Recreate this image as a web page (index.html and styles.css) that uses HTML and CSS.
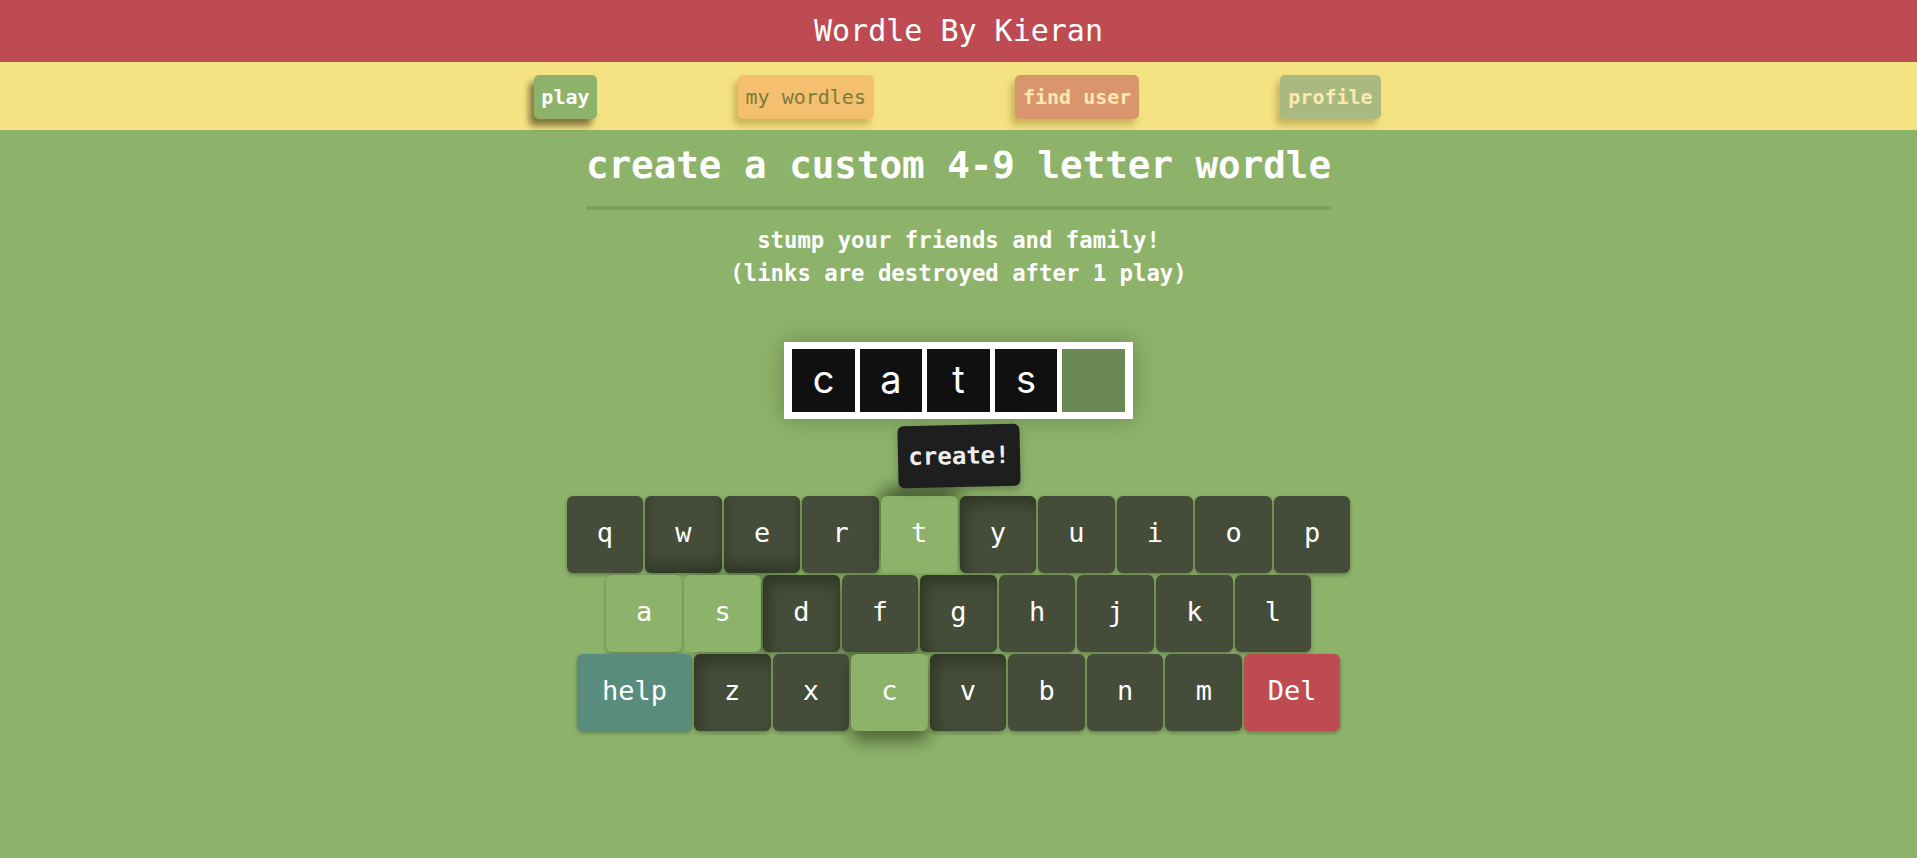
FILE: index.html
```html
<!DOCTYPE html>
<html lang="en">
<head>
<meta charset="utf-8">
<title>Wordle By Kieran</title>
<link rel="stylesheet" href="styles.css">
</head>
<body>
<header class="topbar">Wordle By Kieran</header>
<nav class="navbar">
  <a class="nav-btn nav-play">play</a>
  <a class="nav-btn nav-mine">my wordles</a>
  <a class="nav-btn nav-find">find user</a>
  <a class="nav-btn nav-profile">profile</a>
</nav>
<main class="content">
  <h1 class="heading">create a custom 4-9 letter wordle</h1>
  <p class="subtitle">stump your friends and family!<br>(links are destroyed after 1 play)</p>
  <div class="word-box">
    <div class="tile">c</div>
    <div class="tile">a</div>
    <div class="tile">t</div>
    <div class="tile">s</div>
    <div class="tile tile-empty"></div>
  </div>
  <button class="create-btn">create!</button>
  <div class="keyboard">
    <div class="kb-row">
      <div class="key">q</div><div class="key key-sh-a">w</div><div class="key key-sh-a">e</div><div class="key">r</div><div class="key key-used key-sh-top">t</div><div class="key key-sh-b">y</div><div class="key">u</div><div class="key">i</div><div class="key">o</div><div class="key">p</div>
    </div>
    <div class="kb-row">
      <div class="key key-used">a</div><div class="key key-used key-sh-r">s</div><div class="key key-sh-b">d</div><div class="key key-sh-bottom">f</div><div class="key key-sh-b">g</div><div class="key">h</div><div class="key">j</div><div class="key">k</div><div class="key">l</div>
    </div>
    <div class="kb-row">
      <div class="key key-help">help</div><div class="key key-sh-b">z</div><div class="key">x</div><div class="key key-used key-sh-bottom">c</div><div class="key key-sh-b">v</div><div class="key">b</div><div class="key">n</div><div class="key">m</div><div class="key key-del">Del</div>
    </div>
  </div>
</main>
</body>
</html>
```
FILE: styles.css
```css
html, body {
  margin: 0;
  padding: 0;
}
body {
  background: #8db36b;
  font-family: "DejaVu Sans Mono", "Liberation Mono", monospace;
  color: #ffffff;
  min-height: 858px;
}
.topbar {
  height: 62px;
  background: #bf4b52;
  display: flex;
  align-items: center;
  justify-content: center;
  font-size: 30px;
  color: #ffffff;
  padding-bottom: 2px;
  box-sizing: border-box;
}
.navbar {
  height: 68px;
  background: #f5e283;
  display: flex;
  align-items: center;
  justify-content: center;
  gap: 141px;
  padding-right: 2px;
}
.nav-btn {
  display: block;
  height: 44px;
  line-height: 44px;
  padding: 0 8px;
  font-size: 20px;
  border-radius: 5px;
  margin-top: 2px;
  box-shadow: -4px 6px 6px rgba(120, 100, 20, 0.35);
}
.nav-play {
  background: #8db36b;
  color: #ffffff;
  font-weight: bold;
  padding: 0 7px;
  box-shadow: -5px 7px 6px rgba(60, 50, 20, 0.6);
}
.nav-mine {
  background: #f4c06f;
  color: #7a7a3c;
}
.nav-find {
  background: #d9956b;
  color: #fbe9b0;
  font-weight: bold;
}
.nav-profile {
  background: #a9b980;
  color: #fbe9b0;
  font-weight: bold;
}
.content {
  display: flex;
  flex-direction: column;
  align-items: center;
}
.heading {
  margin: 13px 0 0;
  font-size: 37.5px;
  line-height: 44px;
  font-weight: bold;
  padding-bottom: 19px;
  border-bottom: 4px solid #7ea15e;
}
.subtitle {
  margin: 13.5px 0 0;
  font-size: 22.3px;
  line-height: 33px;
  font-weight: bold;
  text-align: center;
}
.word-box {
  margin-top: 52.5px;
  display: flex;
  gap: 5px;
  padding: 7px 8px;
  background: #ffffff;
  box-shadow: 0 0 22px rgba(40, 60, 20, 0.35);
}
.tile {
  width: 62.5px;
  height: 63px;
  background: #101010;
  color: #ffffff;
  font-family: Inter, "Noto Sans", sans-serif;
  font-size: 38px;
  display: flex;
  align-items: center;
  justify-content: center;
  padding-bottom: 3px;
  box-sizing: border-box;
}
.tile-empty {
  background: #6b8a53;
}
.create-btn {
  margin-top: 6px;
  width: 122px;
  height: 62px;
  background: #1e1e1e;
  color: #eeeeee;
  border: none;
  border-radius: 6px;
  font-family: "DejaVu Sans Mono", "Liberation Mono", monospace;
  font-size: 24px;
  font-weight: bold;
  padding: 0;
  transform: rotate(-1.2deg);
  box-shadow: 0 4px 8px rgba(0, 0, 0, 0.25);
}
.keyboard {
  margin-top: 9px;
  display: flex;
  flex-direction: column;
  align-items: center;
  gap: 2px;
}
.kb-row {
  display: flex;
  gap: 2px;
}
.key {
  width: 76.6px;
  height: 77px;
  background: #454d3a;
  border-radius: 6px;
  display: flex;
  align-items: center;
  justify-content: center;
  font-size: 27px;
  color: #ffffff;
  box-shadow: 0 2px 4px rgba(20, 30, 10, 0.35);
  padding-bottom: 4px;
  box-sizing: border-box;
}
.key-used {
  background: #8db36b;
}
.key-help {
  width: 115px;
  background: #5a8c7e;
}
.key-del {
  width: 96px;
  background: #bf4b52;
}
.key-sh-a {
  box-shadow: 0 2px 4px rgba(20, 30, 10, 0.35), inset 0 -10px 14px rgba(20, 25, 10, 0.35);
}
.key-sh-b {
  box-shadow: 0 2px 4px rgba(20, 30, 10, 0.35), inset 6px 8px 14px rgba(20, 25, 10, 0.4);
}
.key-sh-r {
  box-shadow: 8px 2px 14px rgba(20, 30, 10, 0.45);
}
.key-sh-top {
  box-shadow: 0 -8px 16px rgba(20, 30, 10, 0.55);
}
.key-sh-bottom {
  box-shadow: 0 10px 16px rgba(20, 30, 10, 0.5);
}
```
